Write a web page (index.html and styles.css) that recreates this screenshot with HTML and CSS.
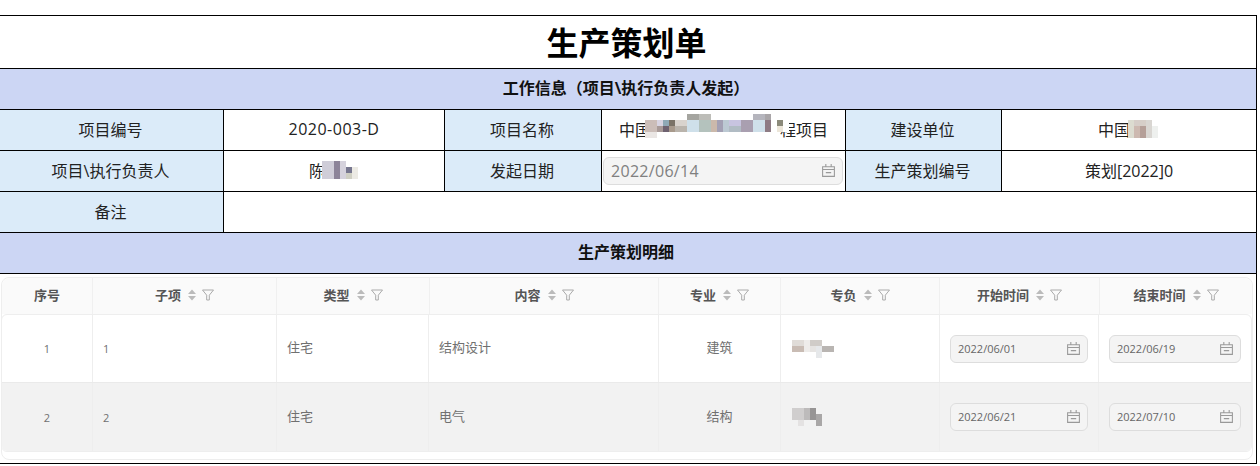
FILE: index.html
```html
<!DOCTYPE html>
<html lang="zh">
<head>
<meta charset="utf-8">
<title>生产策划单</title>
<link rel="stylesheet" href="styles.css">
</head>
<body>
<main class="sheet">
  <h1 class="title">生产策划单</h1>
  <h2 class="section">工作信息（项目\执行负责人发起）</h2>
  <div class="info">
    <div class="cell label">项目编号</div>
    <div class="cell num">2020-003-D</div>
    <div class="cell label">项目名称</div>
    <div class="cell">中国<svg class="blur blur-project" width="144" height="30" viewBox="0 0 24 5" shape-rendering="crispEdges">
      <rect x="0" y="1" width="24" height="2" fill="#f2f2f2"/>
      <rect x="0" y="1" width="2" height="2" fill="#cbbdb8"/><rect x="0" y="3" width="2" height="1" fill="#eae6e4"/>
      <rect x="2" y="1" width="1" height="1" fill="#d8d4e2"/><rect x="2" y="2" width="1" height="1" fill="#a89a98"/>
      <rect x="3" y="1" width="1" height="1" fill="#8fa9b6"/><rect x="3" y="2" width="1" height="1" fill="#6e6270"/>
      <rect x="4" y="1" width="1" height="1" fill="#7b7367"/><rect x="4" y="2" width="1" height="1" fill="#a89a8c"/>
      <rect x="5" y="1" width="2" height="1" fill="#d9d3cd"/><rect x="5" y="2" width="2" height="1" fill="#bab4ac"/>
      <rect x="7" y="0" width="2" height="1" fill="#a5a5a0"/><rect x="7" y="1" width="2" height="2" fill="#cfe0ea"/>
      <rect x="9" y="0" width="2" height="1" fill="#bdbdb8"/><rect x="9" y="1" width="2" height="2" fill="#b4c2bd"/>
      <rect x="11" y="1" width="1" height="2" fill="#cbb9ab"/><rect x="12" y="1" width="1" height="2" fill="#a3a0b4"/>
      <rect x="13" y="1" width="1" height="2" fill="#bcc9d3"/><rect x="14" y="1" width="2" height="1" fill="#c8c4e0"/>
      <rect x="14" y="2" width="2" height="1" fill="#b1bcc4"/><rect x="16" y="1" width="2" height="2" fill="#a99fb0"/>
      <rect x="18" y="0" width="2" height="1" fill="#b5b5bd"/><rect x="18" y="1" width="2" height="2" fill="#cfe0ea"/>
      <rect x="20" y="0" width="1" height="1" fill="#a9a5a8"/><rect x="20" y="1" width="1" height="2" fill="#8e7b84"/>
      <rect x="21" y="1" width="1" height="2" fill="#ffffff"/><rect x="22" y="1" width="1" height="1" fill="#8b8a7a"/>
      <rect x="22" y="2" width="1" height="1" fill="#ece6d9"/><rect x="23" y="1" width="1" height="2" fill="#ffffff"/>
    </svg>程项目</div>
    <div class="cell label">建设单位</div>
    <div class="cell">中国<svg class="blur blur-short" width="34" height="18" viewBox="0 0 5 3" shape-rendering="crispEdges"><rect x="0" y="0" width="1" height="3" fill="#dcdcd0"/><rect x="1" y="0" width="2" height="1" fill="#d6cec8"/><rect x="1" y="1" width="1" height="2" fill="#cdb9b0"/><rect x="2" y="1" width="1" height="2" fill="#b59f98"/><rect x="3" y="0" width="1" height="3" fill="#d9d6d2"/><rect x="4" y="1" width="1" height="2" fill="#eef0ee"/></svg></div>

    <div class="cell label">项目\执行负责人</div>
    <div class="cell">陈<svg class="blur blur-short" width="38" height="18" viewBox="0 0 6 3" shape-rendering="crispEdges"><rect x="0" y="0" width="2" height="3" fill="#cfcdd8"/><rect x="2" y="0" width="1" height="3" fill="#8c8499"/><rect x="3" y="0" width="1" height="3" fill="#d5d2dc"/><rect x="4" y="1" width="1" height="1" fill="#77778f"/><rect x="4" y="2" width="1" height="1" fill="#cfcfc3"/><rect x="5" y="1" width="1" height="2" fill="#eceae4"/></svg></div>
    <div class="cell label">发起日期</div>
    <div class="cell cell-input">
      <div class="date date-large">2022/06/14
        <svg class="cal" viewBox="0 0 14 14"><path d="M1.500 3.500h11v9h-11zM1.500 6h11M4.500 1v2.500M9.500 1v2.500M4.500 9h5"/></svg>
      </div>
    </div>
    <div class="cell label">生产策划编号</div>
    <div class="cell">策划[2022]0</div>

    <div class="cell label">备注</div>
    <div class="cell remark"></div>
  </div>
  <h2 class="section">生产策划明细</h2>

  <div class="table-wrap">
    <div class="detail head">
      <div class="th">序号</div>
      <div class="th">子项<svg class="sort" viewBox="0 0 8 12"><path d="M4 .5l4 4.500H0zM4 11.500L0 7h8z"/></svg><svg class="filter" viewBox="0 0 12 12"><path d="M.5 1h11L7.300 6.200V11H4.700V6.200z"/></svg></div>
      <div class="th">类型<svg class="sort" viewBox="0 0 8 12"><path d="M4 .5l4 4.500H0zM4 11.500L0 7h8z"/></svg><svg class="filter" viewBox="0 0 12 12"><path d="M.5 1h11L7.300 6.200V11H4.700V6.200z"/></svg></div>
      <div class="th">内容<svg class="sort" viewBox="0 0 8 12"><path d="M4 .5l4 4.500H0zM4 11.500L0 7h8z"/></svg><svg class="filter" viewBox="0 0 12 12"><path d="M.5 1h11L7.300 6.200V11H4.700V6.200z"/></svg></div>
      <div class="th">专业<svg class="sort" viewBox="0 0 8 12"><path d="M4 .5l4 4.500H0zM4 11.500L0 7h8z"/></svg><svg class="filter" viewBox="0 0 12 12"><path d="M.5 1h11L7.300 6.200V11H4.700V6.200z"/></svg></div>
      <div class="th">专负<svg class="sort" viewBox="0 0 8 12"><path d="M4 .5l4 4.500H0zM4 11.500L0 7h8z"/></svg><svg class="filter" viewBox="0 0 12 12"><path d="M.5 1h11L7.300 6.200V11H4.700V6.200z"/></svg></div>
      <div class="th">开始时间<svg class="sort" viewBox="0 0 8 12"><path d="M4 .5l4 4.500H0zM4 11.500L0 7h8z"/></svg><svg class="filter" viewBox="0 0 12 12"><path d="M.5 1h11L7.300 6.200V11H4.700V6.200z"/></svg></div>
      <div class="th">结束时间<svg class="sort" viewBox="0 0 8 12"><path d="M4 .5l4 4.500H0zM4 11.500L0 7h8z"/></svg><svg class="filter" viewBox="0 0 12 12"><path d="M.5 1h11L7.300 6.200V11H4.700V6.200z"/></svg></div>
    </div>
    <div class="tbody">
      <div class="detail row">
        <div class="td center idx">1</div>
        <div class="td idx">1</div>
        <div class="td">住宅</div>
        <div class="td">结构设计</div>
        <div class="td center">建筑</div>
        <div class="td td-box"><svg width="44" height="18" viewBox="0 0 7 3" shape-rendering="crispEdges"><rect x="0" y="0" width="2" height="1" fill="#e0dcd8"/><rect x="0" y="1" width="2" height="1" fill="#c9bcb4"/><rect x="2" y="0" width="1" height="2" fill="#eeecea"/><rect x="3" y="0" width="2" height="1" fill="#d0ccc8"/><rect x="3" y="1" width="1" height="1" fill="#e6e4e2"/><rect x="4" y="1" width="1" height="2" fill="#e6e8ea"/><rect x="5" y="1" width="2" height="1" fill="#b9b5b2"/></svg></div>
        <div class="td td-box"><div class="date">2022/06/01<svg class="cal" viewBox="0 0 14 14"><path d="M1.500 3.500h11v9h-11zM1.500 6h11M4.500 1v2.500M9.500 1v2.500M4.500 9h5"/></svg></div></div>
        <div class="td td-box"><div class="date">2022/06/19<svg class="cal" viewBox="0 0 14 14"><path d="M1.500 3.500h11v9h-11zM1.500 6h11M4.500 1v2.500M9.500 1v2.500M4.500 9h5"/></svg></div></div>
      </div>
      <div class="detail row row-alt">
        <div class="td center idx">2</div>
        <div class="td idx">2</div>
        <div class="td">住宅</div>
        <div class="td">电气</div>
        <div class="td center">结构</div>
        <div class="td td-box"><svg width="32" height="18" viewBox="0 0 5 3" shape-rendering="crispEdges"><rect x="0" y="0" width="2" height="2" fill="#d0cece"/><rect x="2" y="0" width="1" height="2" fill="#bdbbbb"/><rect x="3" y="0" width="1" height="2" fill="#979595"/><rect x="1" y="2" width="1" height="1" fill="#e4e2e2"/><rect x="4" y="1" width="1" height="2" fill="#a9a7a7"/></svg></div>
        <div class="td td-box"><div class="date">2022/06/21<svg class="cal" viewBox="0 0 14 14"><path d="M1.500 3.500h11v9h-11zM1.500 6h11M4.500 1v2.500M9.500 1v2.500M4.500 9h5"/></svg></div></div>
        <div class="td td-box"><div class="date">2022/07/10<svg class="cal" viewBox="0 0 14 14"><path d="M1.500 3.500h11v9h-11zM1.500 6h11M4.500 1v2.500M9.500 1v2.500M4.500 9h5"/></svg></div></div>
      </div>
    </div>
  </div>
</main>
</body>
</html>
```
FILE: styles.css
```css
* { box-sizing: border-box; }
html, body { margin: 0; background: #fff; overflow: hidden; }
body {
  padding-top: 15px;
  font-family: "Open Sans", "Noto Sans CJK SC", sans-serif;
  color: #222;
}
.sheet {
  width: 1257px;
  border-top: 1px solid #000;
  border-right: 1px solid #000;
  border-bottom: 1px solid #000;
}
.title {
  margin: 0;
  height: 53px;
  padding: 0 3px 2px 0;
  display: flex;
  align-items: center;
  justify-content: center;
  font-size: 32px;
  font-weight: 700;
  color: #000;
  border-bottom: 1px solid #000;
}
.section {
  margin: 0;
  height: 41px;
  padding: 0 4px 4px 0;
  display: flex;
  align-items: center;
  justify-content: center;
  font-size: 16px;
  font-weight: 700;
  color: #111;
  background: #ccd6f4;
  border-bottom: 1px solid #000;
}
.info {
  display: grid;
  grid-template-columns: 224px 221px 157px 244px 156px 254px;
  grid-auto-rows: 41px;
}
.cell {
  display: flex;
  align-items: center;
  justify-content: center;
  padding-bottom: 2px;
  font-size: 16px;
  border-right: 1px solid #000;
  border-bottom: 1px solid #000;
  white-space: nowrap;
}
.cell:nth-child(6n), .remark { border-right: 0; }
.label { padding-right: 2px; background: #dbebf9; }
.num { letter-spacing: .5px; }
.remark { grid-column: 2 / 7; }
.blur { flex: none; position: relative; }
.blur-project { margin: 0 -9px 0 -6px; }
.blur-short { margin-left: -4px; }
.cell-input { padding: 0 2px 0 1px; }
.date {
  display: flex;
  align-items: center;
  justify-content: space-between;
  width: 100%;
  height: 28px;
  padding: 0 6px 1px 7px;
  font-size: 11px;
  color: #666;
  background: #f4f4f4;
  border: 1px solid #ddd;
  border-radius: 6px;
}
.date-large { font-size: 16px; letter-spacing: .3px; color: #808080; }
.cal { width: 15px; height: 15px; flex: none; fill: none; stroke: #999; stroke-width: 1; }
.table-wrap {
  margin: 3px 3px 3px 1px;
  height: 183px;
  border: 1px solid #eee;
  border-radius: 8px;
  background: #fff;
}
.detail {
  display: grid;
  grid-template-columns: 91px 184px 153px 229px 122px 159px 160px 1fr;
}
.head {
  height: 36px;
  background: #fafafa;
  border-radius: 8px 8px 0 0;
}
.th {
  display: flex;
  align-items: center;
  justify-content: center;
  padding-bottom: 4px;
  font-size: 13px;
  font-weight: 700;
  color: #555;
  border-right: 1px solid #f0f0f0;
}
.th:last-child { border-right: 0; }
.sort { width: 8px; height: 12px; margin: 2px 0 0 7px; fill: #bbb; }
.filter { width: 12px; height: 12px; margin: 2px 0 0 6px; fill: none; stroke: #aaa; stroke-width: 1; }
.tbody {
  margin-left: -1px;
  height: 138px;
  border: 1px solid #eee;
  border-radius: 6px;
  overflow: hidden;
}
.row {
  height: 67px;
  grid-template-columns: 91px 184px 152px 230px 122px 159px 159px 1fr;
}
.row-alt { height: 69px; background: #f2f2f2; border-top: 1px solid #eaeaea; }
.td {
  display: flex;
  align-items: center;
  padding: 0 10px 4px;
  font-size: 13px;
  color: #707070;
  border-right: 1px solid #eee;
}
.td:last-child { border-right: 0; }
.td-box { padding-bottom: 0; }
.td.idx { padding-bottom: 0; font-size: 11px; }
.center { justify-content: center; }
```
